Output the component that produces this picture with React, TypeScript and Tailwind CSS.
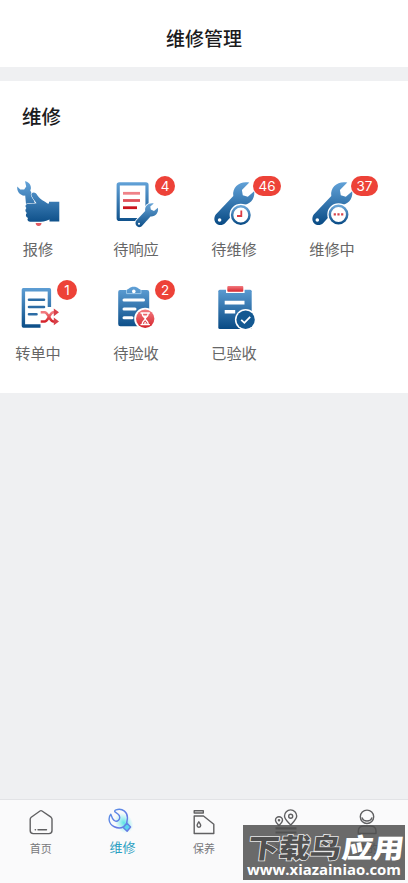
import type { ReactNode } from "react"

const WRENCH =
  "M42.3 6.6 C33.5 4.6 25 10.5 26.3 20 L9 38.3 C6.8 41 6.8 45 9.3 47.5 C12 49.8 15.7 49.6 18.3 47 L34.5 29 C42 29.5 48.3 23.5 47.2 15.2 L40.8 20.8 L35.8 19.2 L34.9 14 Z"

function Defs() {
  return (
    <svg className="absolute h-0 w-0" aria-hidden="true">
      <defs>
        <linearGradient id="blue" gradientUnits="userSpaceOnUse" x1="0" y1="6" x2="0" y2="49">
          <stop offset="0" stopColor="#62a2d8" />
          <stop offset="1" stopColor="#084a84" />
        </linearGradient>
        <linearGradient id="red" x1="0" y1="0" x2="0" y2="1">
          <stop offset="0" stopColor="#f37b80" />
          <stop offset="1" stopColor="#d5232b" />
        </linearGradient>
        <linearGradient id="ring" x1="0" y1="0" x2="0" y2="1">
          <stop offset="0" stopColor="#69a5d7" />
          <stop offset="1" stopColor="#0c4e88" />
        </linearGradient>
        <linearGradient id="tool" x1="0" y1="0" x2="1" y2="1">
          <stop offset="0" stopColor="#5791e6" />
          <stop offset="1" stopColor="#6a72e4" />
        </linearGradient>
        <radialGradient id="glow">
          <stop offset="0" stopColor="#3fe0e0" stopOpacity="0.85" />
          <stop offset="1" stopColor="#5be9ee" stopOpacity="0" />
        </radialGradient>
      </defs>
    </svg>
  )
}

function Icon({ children }: { children: ReactNode }) {
  return (
    <svg className="h-[54px] w-[54px]" viewBox="0 0 54 54" fill="none">
      {children}
    </svg>
  )
}

function ReportIcon() {
  return (
    <Icon>
      <path
        d="M14 5.3 C17.3 5.6 20.2 8.6 19.9 12.6 L19.3 14.5 L22 20 L24 28 H15 L14.2 19.6 C10 20.3 5.4 16 6.3 10.6 L9.3 13.6 L13.2 13.4 L15.2 10.6 Z"
        fill="url(#blue)"
      />
      <path
        d="M20.5 17.5 C22.5 15.7 25.2 16.8 26.5 19.5 C28 22 31 24 34 25.8 L36.5 27.5 H38 V25.8 H48.3 V45.6 H38.5 V43.6 C34 45.7 31 45.8 27 45.8 H19 C16.5 45.6 15.8 43.4 17 42 C14.6 41 14.3 38.5 15.8 37 C14 35.7 14 33.3 15.4 32 C14 30.7 14.3 28.5 16 28 C20 27.5 23 27.8 25.5 27.3 C23.5 24 19.5 20 20.5 17.5 Z"
        fill="url(#blue)"
        stroke="#fff"
        strokeWidth="1.2"
        paintOrder="stroke"
      />
      <path d="M24.7 47 H30.5 C30.5 48.5 29.8 50 27.6 50 C25.4 50 24.7 48.5 24.7 47 Z" fill="#e35a62" />
    </Icon>
  )
}

function PendingResponseIcon() {
  return (
    <Icon>
      <rect x="9.2" y="7.9" width="28.8" height="35.6" rx="1.2" stroke="url(#blue)" strokeWidth="3.2" />
      <path d="M14 17.3 H31" stroke="#ef8288" strokeWidth="2.8" />
      <path d="M14 24.5 H31" stroke="#e05058" strokeWidth="2.8" />
      <path d="M14 31.7 H28" stroke="#cb141d" strokeWidth="2.8" />
      <path
        d="M44.8 27.5 C39.5 26.5 35.5 30 36.2 35 L27.3 44.6 C25.5 47 27 51 30 51.2 C31.5 51.2 32.8 50.2 33.6 49.2 L41.5 40.4 C46 41 50 37 48.9 31.8 L45 35 L41.8 33.5 L41.3 30.5 Z"
        fill="url(#ring)"
        stroke="#fff"
        strokeWidth="1.8"
        paintOrder="stroke"
      />
      <circle cx="30" cy="47.8" r="1" fill="#fff" />
    </Icon>
  )
}

function PendingRepairIcon() {
  return (
    <Icon>
      <path d={WRENCH} fill="url(#blue)" />
      <circle cx="12.6" cy="44" r="1.8" fill="#fff" />
      <circle cx="33.8" cy="39" r="9.2" fill="#fff" stroke="#fff" strokeWidth="4" />
      <circle cx="33.8" cy="39" r="8.7" fill="#fff" stroke="url(#ring)" strokeWidth="2.5" />
      <path d="M34.3 34.5 V40 H30" stroke="#dc3c44" strokeWidth="1.8" />
    </Icon>
  )
}

function RepairingIcon() {
  return (
    <Icon>
      <path d={WRENCH} fill="url(#blue)" />
      <circle cx="12.3" cy="44" r="1.8" fill="#fff" />
      <circle cx="33.5" cy="38.5" r="9.2" fill="#fff" stroke="#fff" strokeWidth="4" />
      <circle cx="33.5" cy="38.5" r="8.7" fill="#fff" stroke="url(#ring)" strokeWidth="2.5" />
      <path d="M28.7 37.3 h2.2 v2.2 h-2.2 Z M32.4 37.3 h2.2 v2.2 h-2.2 Z M36.1 37.3 h2.2 v2.2 h-2.2 Z" fill="#d8444b" />
    </Icon>
  )
}

function TransferIcon() {
  return (
    <Icon>
      <path d="M38.4 27 V9.7 H12.4 V46 H29.5" stroke="url(#blue)" strokeWidth="3.4" strokeLinejoin="round" />
      <path d="M18 19.7 H33 M18 27 H33 M18 34.3 H25.5" stroke="#2c6ca5" strokeWidth="2.6" strokeLinecap="round" />
      <path
        d="M29.7 32.3 H33.5 C37.5 32.3 38.5 41.5 42.5 41.5 H44 M29.7 41.5 H33.5 C37.5 41.5 38.5 32.3 42.5 32.3 H44"
        stroke="url(#red)"
        strokeWidth="2.6"
      />
      <path d="M42.8 28.6 L48 32.3 L42.8 36.2 Z M42.8 37.6 L48 41.5 L42.8 45.3 Z" fill="#d9414a" />
    </Icon>
  )
}

function PendingCheckIcon() {
  return (
    <Icon>
      <path
        d="M11 10 H17.5 L20 8.5 C22 6.3 27.5 6.3 29.5 8.5 L32 10 H38 Q40.2 10 40.2 12.2 V46.3 H11.3 Q9.2 46.3 9.2 44 V12 Q9.2 10 11 10 Z"
        fill="url(#blue)"
      />
      <path d="M17.5 10 V13.6 H32 V10" stroke="#9bc7e9" strokeWidth="1" />
      <circle cx="24.8" cy="11.4" r="1.8" fill="#fff" />
      <path d="M15 20 H34.5 M15 29 H26 M15 37.7 H23" stroke="#fff" strokeWidth="3" strokeLinecap="round" />
      <circle cx="36.2" cy="38.8" r="11" fill="#fff" />
      <circle cx="36.2" cy="38.8" r="9.2" fill="url(#red)" />
      <path
        d="M32 33 H40.4 M32 44.6 H40.4 M33.2 33.5 C33.2 37 36.2 37.2 36.2 38.8 C36.2 40.4 33.2 41 33.2 44 M39.2 33.5 C39.2 37 36.2 37.2 36.2 38.8 C36.2 40.4 39.2 41 39.2 44"
        stroke="#fff"
        strokeWidth="1.4"
        strokeLinecap="round"
      />
      <path d="M34.4 43.8 L36.2 41.8 L38 43.8 Z M34 35.5 H38.4 L36.2 38 Z" fill="#fff" />
    </Icon>
  )
}

function CheckedIcon() {
  return (
    <Icon>
      <rect x="11.3" y="9.7" width="33.4" height="39.4" rx="1.5" fill="url(#blue)" />
      <rect x="19" y="5" width="18.6" height="8" fill="#fff" />
      <rect x="20.3" y="6" width="16" height="5.8" rx="1" fill="url(#red)" />
      <path d="M17.7 22.6 H37.5 M17.7 31.7 H28.2" stroke="#fff" strokeWidth="3.6" />
      <circle cx="38.6" cy="39.7" r="10.7" fill="#fff" />
      <circle cx="38.6" cy="39.7" r="9.2" fill="#135891" />
      <path d="M34.2 39.8 L37.4 42.8 L43.2 36.8" stroke="#fff" strokeWidth="1.8" />
    </Icon>
  )
}

function TabIcon({ children }: { children: ReactNode }) {
  return (
    <svg
      className="h-[30px] w-[30px]"
      viewBox="0 0 30 30"
      fill="none"
      stroke="#606062"
      strokeWidth="1.4"
      strokeLinecap="round"
      strokeLinejoin="round"
    >
      {children}
    </svg>
  )
}

function HomeIcon() {
  return (
    <TabIcon>
      <path d="M4.2 11.2 Q4.2 10 5.2 9.2 L14 3 Q15 2.3 16 3 L25 9.2 Q26 10 26 11.2 V22.5 Q26 25.6 23 25.6 H7.2 Q4.2 25.6 4.2 22.5 Z" />
      <path d="M9.2 21.8 H9.5 M12 21.8 H20.5" />
    </TabIcon>
  )
}

function RepairTabIcon() {
  return (
    <TabIcon>
      <ellipse cx="17" cy="15" rx="8.5" ry="11" transform="rotate(-35 17 15)" fill="url(#glow)" stroke="none" />
      <path
        d="M9 1.8 C15.5 -.2 21.3 4.2 20.3 11.2 L19.6 15.6 L16.3 19 C10.5 21.8 2.8 17.8 2.2 12.2 C1.9 9.7 2.4 7.8 3.8 6.2 L5.6 10.7 C7 13.3 9.7 14 11.5 12.2 C13.3 10.4 13.1 8 11.2 6.3 L8 3.9 C7.3 3.2 7.8 2.2 9 1.8 Z"
        stroke="url(#tool)"
      />
      <path d="M20 15.3 L23.6 19 L20.1 23.3 L16.2 19.4 Z" fill="#58d5ec" stroke="url(#tool)" />
    </TabIcon>
  )
}

function OilIcon() {
  return (
    <TabIcon>
      <path d="M5.2 2.7 H14.3 V5 H5.2 Z M5.2 8 H14.5 L24.8 16.3 V25.5 H5.2 Z" />
      <path d="M9.8 13.8 C8.8 15.5 8.1 16.2 8.1 17.5 A1.8 1.8 0 0 0 11.7 17.5 C11.7 16.2 10.8 15.5 9.8 13.8 Z" />
    </TabIcon>
  )
}

function PatrolIcon() {
  return (
    <TabIcon>
      <path d="M19.7 17 C15.5 12.5 13.5 11 13.5 8 A6 6 0 0 1 25.7 8 C25.7 11 23.5 13 19.7 17 Z" />
      <circle cx="19.7" cy="8.2" r="2" />
      <path d="M8 17.5 C5.5 15 4.5 14 4.5 12.3 A3.5 3.5 0 0 1 11.5 12.3 C11.5 14 10 15.4 8 17.5 Z" />
      <circle cx="8" cy="12.3" r="0.6" />
      <path d="M4.5 20.3 H25.5 M4.5 24.5 H25.5" strokeWidth="2.2" strokeLinecap="butt" />
    </TabIcon>
  )
}

function MineIcon() {
  return (
    <TabIcon>
      <circle cx="15" cy="8.8" r="6.7" />
      <path d="M10.2 10 C11.5 14 18.5 14 19.8 10 M6.3 25.5 V23 C6.3 19.5 8.5 18 12 18 H18.2 C21.7 18 24 19.5 24 23 V25.5 Z" />
    </TabIcon>
  )
}

const actions = [
  { label: "报修", icon: <ReportIcon /> },
  { label: "待响应", icon: <PendingResponseIcon />, count: 4 },
  { label: "待维修", icon: <PendingRepairIcon />, count: 46 },
  { label: "维修中", icon: <RepairingIcon />, count: 37 },
  { label: "转单中", icon: <TransferIcon />, count: 1 },
  { label: "待验收", icon: <PendingCheckIcon />, count: 2 },
  { label: "已验收", icon: <CheckedIcon /> },
]

const tabs = [
  { label: "首页", icon: <HomeIcon /> },
  { label: "维修", icon: <RepairTabIcon />, active: true },
  { label: "保养", icon: <OilIcon /> },
  { label: "巡检", icon: <PatrolIcon /> },
  { label: "我的", icon: <MineIcon /> },
]

export default function App() {
  return (
    <div className="relative flex h-[883px] w-[408px] flex-col overflow-hidden bg-[#eff0f2] font-['Noto_Sans_CJK_SC',sans-serif]">
      <Defs />

      {/* Header */}
      <header className="flex h-[67px] items-end justify-center bg-white pb-[15px]">
        <h1 className="text-[19px] leading-[28px] font-medium text-[#1b1b1d]">维修管理</h1>
      </header>

      {/* Repair actions */}
      <section className="mt-[14px] h-[312px] bg-white pt-[21px]">
        <h2 className="pl-[22px] text-[19.5px] leading-[28px] font-medium text-[#1b1b1d]">维修</h2>
        <div className="mt-[46px] -ml-[11px] grid w-[392px] grid-cols-4">
          {actions.map(({ label, icon, count }) => (
            <div key={label} className="relative flex h-[104px] flex-col items-center">
              {icon}
              <span className="mt-[7px] text-[15.2px] leading-[22px] text-[#666]">{label}</span>
              {count && (
                <span className="absolute top-0 left-[68px] flex h-5 min-w-5 items-center justify-center rounded-full bg-[#ed4238] px-[5.5px] font-['Inter',sans-serif] text-[13.5px] leading-5 text-white">
                  {count}
                </span>
              )}
            </div>
          ))}
        </div>
      </section>

      {/* Tab bar */}
      <nav className="mt-auto grid h-[84px] grid-cols-5 border-t border-[#e2e3e6] bg-[#fafafb] pt-[8px]">
        {tabs.map(({ label, icon, active }) => (
          <div key={label} className="flex flex-col items-center">
            {icon}
            <span
              className={
                active
                  ? "mt-px text-[13px] leading-[16px] text-[#2b9fc2]"
                  : "mt-[2px] text-[11px] leading-[16px] text-[#77777a]"
              }
            >
              {label}
            </span>
          </div>
        ))}
      </nav>

      {/* Site mark */}
      <div className="absolute top-[825px] left-[243px] h-[55px] w-[162px] bg-[#505050]/85">
        <svg className="h-[55px] w-[162px] overflow-visible" viewBox="0 0 162 55">
          <g
            transform="translate(4 33) skewX(-7) scale(1 .87)"
            fontFamily="Noto Sans CJK SC"
            fontWeight="900"
            fontSize="31"
          >
            <text fill="#505050" stroke="#e8e8e8" strokeWidth="1.8" paintOrder="stroke">
              下载鸟
            </text>
            <text x="94" fill="#fff">
              应用
            </text>
          </g>
          <text
            x="4"
            y="50"
            textLength="154"
            lengthAdjust="spacingAndGlyphs"
            fontFamily="Open Sans"
            fontWeight="700"
            fontSize="14.5"
            fill="#fff"
          >
            www.xiazainiao.com
          </text>
        </svg>
      </div>
    </div>
  )
}
